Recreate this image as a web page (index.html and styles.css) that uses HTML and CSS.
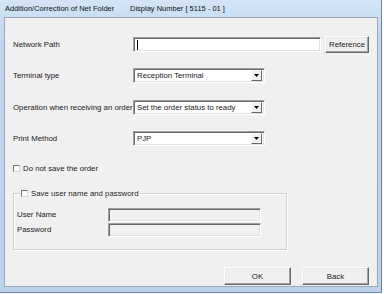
FILE: index.html
```html
<!DOCTYPE html>
<html lang="en">
<head>
  <meta charset="UTF-8" />
  <title>Addition/Correction of Net Folder</title>
  <link rel="stylesheet" href="styles.css">
</head>
<body>
  <div class="window">
    <div class="titlebar">
      <span class="title">Addition/Correction of Net Folder</span>
      <span class="title-num">Display Number [ 5115 - 01 ]</span>
    </div>

    <div class="client">
      <div class="row row-path">
        <span class="label">Network Path</span>
        <div class="field field-path"><span class="caret"></span></div>
        <button class="btn btn-ref">Reference</button>
      </div>

      <div class="row row-terminal">
        <span class="label">Terminal type</span>
        <div class="field combo">
          <span class="combo-text">Reception Terminal</span>
          <span class="combo-arrow"><svg width="5" height="3" viewBox="0 0 5 3"><path d="M0 0h5L2.5 3z" fill="#000"/></svg></span>
        </div>
      </div>

      <div class="row row-operation">
        <span class="label">Operation when receiving an order</span>
        <div class="field combo">
          <span class="combo-text">Set the order status to ready</span>
          <span class="combo-arrow"><svg width="5" height="3" viewBox="0 0 5 3"><path d="M0 0h5L2.5 3z" fill="#000"/></svg></span>
        </div>
      </div>

      <div class="row row-print">
        <span class="label">Print Method</span>
        <div class="field combo">
          <span class="combo-text">PJP</span>
          <span class="combo-arrow"><svg width="5" height="3" viewBox="0 0 5 3"><path d="M0 0h5L2.5 3z" fill="#000"/></svg></span>
        </div>
      </div>

      <div class="check-row">
        <span class="check"></span>
        <span>Do not save the order</span>
      </div>

      <fieldset class="group">
        <legend class="group-title"><span class="check"></span><span>Save user name and password</span></legend>
        <div class="group-row">
          <span class="group-label">User Name</span>
          <div class="field field-off"></div>
        </div>
        <div class="group-row">
          <span class="group-label">Password</span>
          <div class="field field-off"></div>
        </div>
      </fieldset>

      <div class="actions">
        <button class="btn btn-action">OK</button>
        <button class="btn btn-action">Back</button>
      </div>
    </div>
  </div>
</body>
</html>
```

FILE: styles.css
```css
html, body {
  margin: 0;
  background: #ffffff;
}

body {
  font-family: 'Liberation Sans', Arial, sans-serif;
  font-size: 7.8px;
  color: #1a1a1a;
}

.window {
  box-sizing: border-box;
  width: 382px;
  height: 293px;
  padding: 0 3px 5px 4px;
  display: flex;
  flex-direction: column;
  background: linear-gradient(#d3e4f6, #c2d7ee 40px, #bcd3ec);
  border-right: 1px solid #6f8196;
  border-bottom: 1px solid #6f8196;
}

.titlebar {
  height: 17px;
  display: flex;
  align-items: center;
  padding-left: 1px;
  font-size: 7.5px;
  color: #111;
}

.title {
  width: 125px;
}

.client {
  box-sizing: border-box;
  flex: 1;
  display: flex;
  flex-direction: column;
  padding: 0 8px 1px 8px;
  background: #f0f0f0;
  border: 1px solid #9aa8b7;
}

.row {
  display: flex;
  align-items: center;
}

.label {
  width: 120px;
}

.row-path {
  margin-top: 18px;
  height: 17px;
}

.row-terminal {
  margin-top: 15px;
  height: 15px;
}

.row-operation {
  margin-top: 17px;
  height: 15px;
}

.row-print {
  margin-top: 16px;
  height: 15px;
}

/* sunken edit box */
.field {
  box-sizing: border-box;
  height: 15px;
  background: #fff;
  border-top: 1px solid #a0a0a0;
  border-left: 1px solid #a0a0a0;
  border-right: 1px solid #fff;
  border-bottom: 1px solid #fff;
  box-shadow: inset 1px 1px #696969, inset -1px -1px #e3e3e3;
}

.field-path {
  width: 188px;
  display: flex;
  align-items: center;
  padding-left: 3px;
}

.caret {
  width: 1px;
  height: 10px;
  background: #000;
}

.combo {
  width: 132px;
  display: flex;
  align-items: center;
  padding: 2px;
}

.combo-text {
  flex: 1;
  padding-left: 1px;
}

.combo-arrow {
  box-sizing: border-box;
  width: 11px;
  height: 11px;
  display: flex;
  align-items: center;
  justify-content: center;
  background: #f0f0f0;
  border-top: 1px solid #fff;
  border-left: 1px solid #fff;
  border-right: 1px solid #696969;
  border-bottom: 1px solid #696969;
}

/* raised push button */
.btn {
  box-sizing: border-box;
  margin: 0;
  padding: 0;
  font: inherit;
  color: #1a1a1a;
  background: #f0f0f0;
  border-top: 1px solid #fff;
  border-left: 1px solid #fff;
  border-right: 1px solid #696969;
  border-bottom: 1px solid #696969;
  box-shadow: inset -1px -1px #a0a0a0, inset 1px 1px #e8e8e8;
}

.btn-ref {
  width: 44px;
  height: 17px;
  margin-left: 4px;
}

.check {
  box-sizing: border-box;
  display: inline-block;
  width: 7px;
  height: 7px;
  background: #fff;
  border-top: 1px solid #707070;
  border-left: 1px solid #707070;
  border-right: 1px solid #d8d8d8;
  border-bottom: 1px solid #d8d8d8;
}

.check-row {
  margin-top: 17px;
  height: 10px;
  display: flex;
  align-items: center;
  gap: 3px;
}

.group {
  box-sizing: border-box;
  width: 274px;
  margin: 15px 0 0 0;
  padding: 9px 3px 12px 3px;
  border: 1px solid #d0d0d0;
  box-shadow: inset 1px 1px #fff, 1px 1px #fff;
}

.group-title {
  display: flex;
  align-items: center;
  gap: 3px;
  height: 10px;
  margin-left: 3px;
  padding: 0 2px 0 1px;
}

.group-row {
  display: flex;
  align-items: center;
  height: 15px;
}

.group-label {
  width: 91px;
}

.field-off {
  width: 153px;
  height: 14px;
  background: #f0f0f0;
}

.actions {
  margin-top: auto;
  display: flex;
  justify-content: flex-end;
  gap: 11px;
}

.btn-action {
  width: 67px;
  height: 18px;
}
```
